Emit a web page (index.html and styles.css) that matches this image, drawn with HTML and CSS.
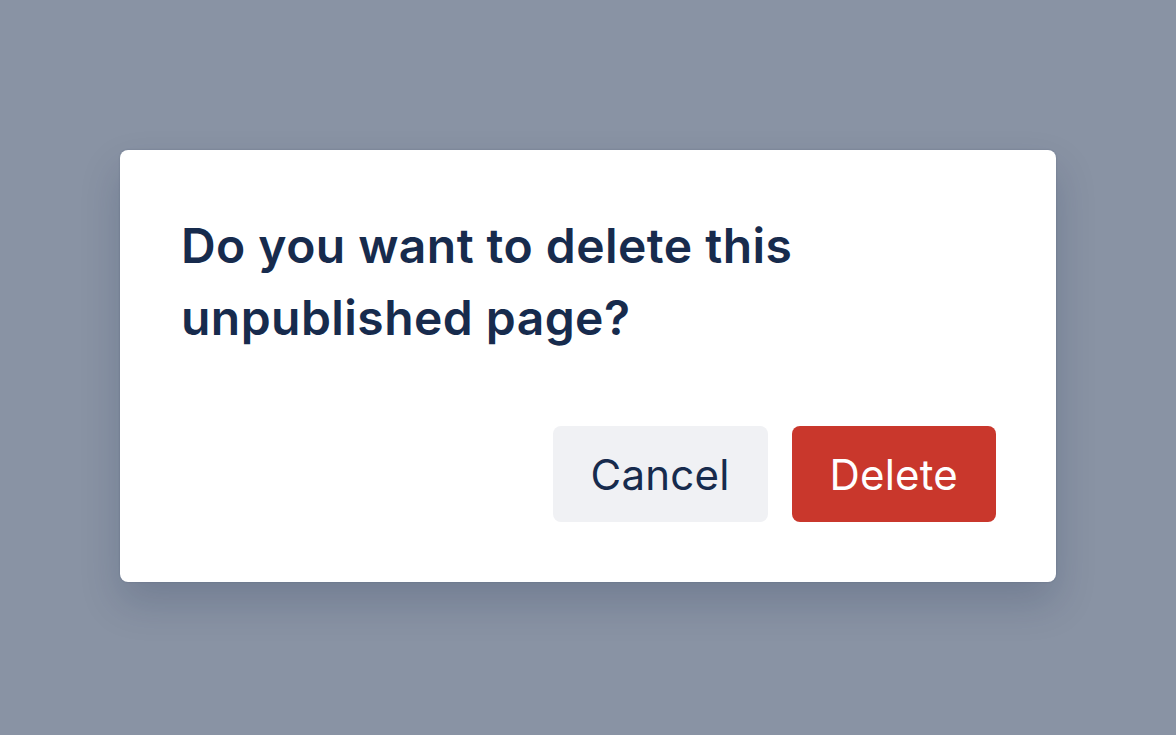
FILE: index.html
```html
<!DOCTYPE html>
<html lang="en">
<head>
  <meta charset="UTF-8">
  <meta name="viewport" content="width=device-width, initial-scale=1.0">
  <title>Delete page</title>
  <link rel="stylesheet" href="styles.css">
</head>
<body>
  <div class="overlay">
    <div class="modal" role="dialog" aria-labelledby="modal-title">
      <h1 id="modal-title" class="modal-title">Do you want to delete this unpublished page?</h1>
      <div class="modal-actions">
        <button class="btn btn-subtle">Cancel</button>
        <button class="btn btn-danger">Delete</button>
      </div>
    </div>
  </div>
</body>
</html>
```

FILE: styles.css
```css
body {
  margin: 0;
  padding: 0;
  font-family: Inter, "Noto Sans", sans-serif;
  background: #8993a4;
  color: #172b4d;
}

.overlay {
  height: 100vh;
  display: flex;
  align-items: center;
  justify-content: center;
}

.modal {
  width: 936px;
  box-sizing: border-box;
  margin-bottom: 3px;
  padding: 60px 60px 60px 61px;
  background: #fff;
  border-radius: 8px;
  box-shadow: 0 20px 40px rgba(9, 30, 66, 0.18), 0 0 2px rgba(9, 30, 66, 0.2);
}

.modal-title {
  margin: 0;
  width: 700px;
  font-size: 48px;
  line-height: 72px;
  font-weight: 600;
  letter-spacing: 0.45px;
  color: #172b4d;
}

.modal-actions {
  display: flex;
  justify-content: flex-end;
  gap: 24px;
  margin-top: 72px;
}

.btn {
  height: 96px;
  padding: 0 38px;
  border: none;
  border-radius: 8px;
  font-family: inherit;
  font-size: 42px;
  font-weight: 400;
  letter-spacing: 0.2px;
  cursor: pointer;
}

.btn-subtle {
  background: #f0f1f4;
  color: #172b4d;
}

.btn-danger {
  background: #c9372c;
  color: #fff;
}
```
